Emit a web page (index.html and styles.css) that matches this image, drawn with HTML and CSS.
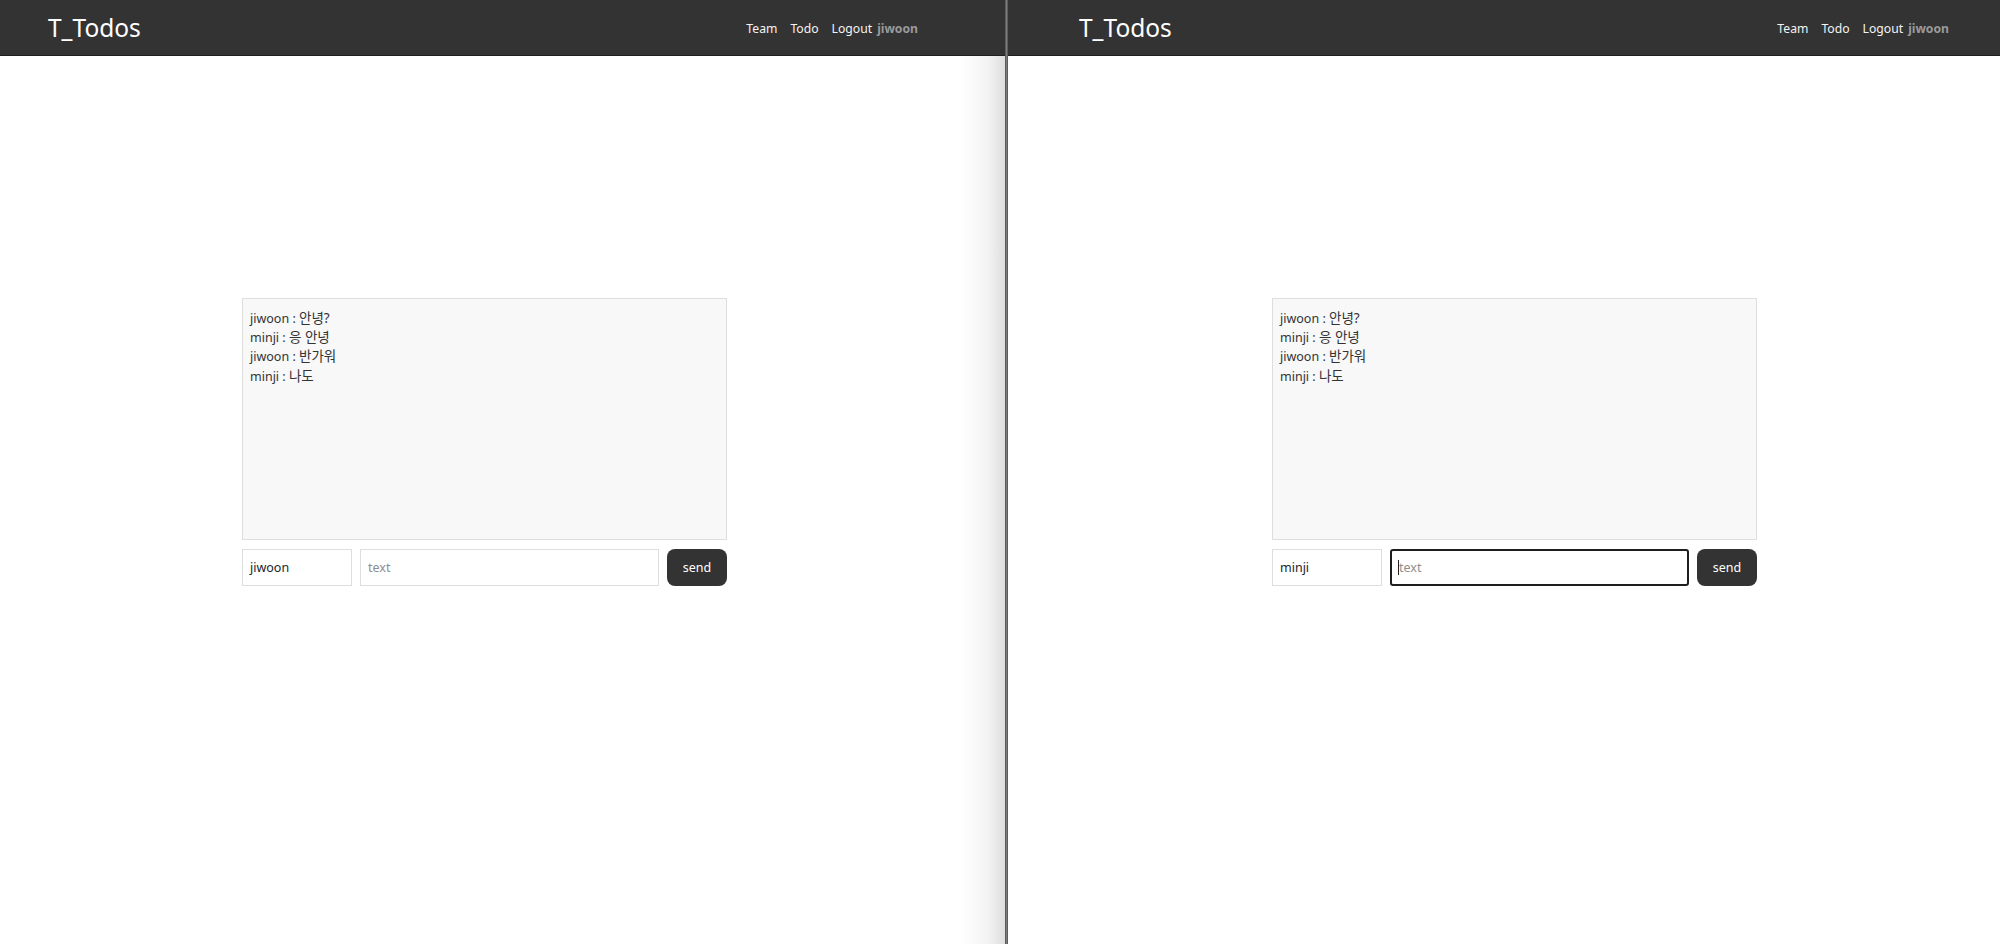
FILE: index.html
```html
<!DOCTYPE html>
<html lang="ko">
<head>
<meta charset="utf-8">
<title>T_Todos</title>
<link rel="stylesheet" href="styles.css">
</head>
<body>
  <div class="screen">
    <section class="pane pane-left">
      <header class="navbar">
        <div class="brand">T_Todos</div>
        <nav class="menu">
          <a class="menu-link">Team</a>
          <a class="menu-link">Todo</a>
          <a class="menu-link">Logout</a>
          <span class="menu-user">jiwoon</span>
        </nav>
      </header>
      <main class="main">
        <div class="chat">
          <div class="chat-log">
            <div class="msg">jiwoon : <span class="ko">안녕?</span></div>
            <div class="msg">minji : <span class="ko">응 안녕</span></div>
            <div class="msg">jiwoon : <span class="ko">반가워</span></div>
            <div class="msg">minji : <span class="ko">나도</span></div>
          </div>
          <div class="chat-form">
            <div class="field field-name"><span class="value">jiwoon</span></div>
            <div class="field field-text"><span class="placeholder">text</span></div>
            <button class="send">send</button>
          </div>
        </div>
      </main>
    </section>
    <div class="divider"></div>
    <section class="pane pane-right">
      <header class="navbar">
        <div class="brand">T_Todos</div>
        <nav class="menu">
          <a class="menu-link">Team</a>
          <a class="menu-link">Todo</a>
          <a class="menu-link">Logout</a>
          <span class="menu-user">jiwoon</span>
        </nav>
      </header>
      <main class="main">
        <div class="chat">
          <div class="chat-log">
            <div class="msg">jiwoon : <span class="ko">안녕?</span></div>
            <div class="msg">minji : <span class="ko">응 안녕</span></div>
            <div class="msg">jiwoon : <span class="ko">반가워</span></div>
            <div class="msg">minji : <span class="ko">나도</span></div>
          </div>
          <div class="chat-form">
            <div class="field field-name"><span class="value">minji</span></div>
            <div class="field field-text focused"><span class="caret"></span><span class="placeholder">text</span></div>
            <button class="send">send</button>
          </div>
        </div>
      </main>
    </section>
  </div>
</body>
</html>
```
FILE: styles.css
```css
* { box-sizing: border-box; }
html, body { margin: 0; padding: 0; }
body {
  width: 2000px;
  height: 944px;
  overflow: hidden;
  background: #fff;
  font-family: "Noto Sans", "Noto Sans CJK KR", sans-serif;
  color: #212529;
}
.screen {
  display: flex;
  height: 944px;
}
.pane {
  display: flex;
  flex-direction: column;
  height: 100%;
  overflow: hidden;
}
.pane-left { width: 1005px; flex: none; }
.pane-right { flex: 1; }

.divider {
  width: 3px;
  flex: none;
  background: #7a7a7a;
  border-left: 1px solid #5e5e5e;
  border-right: 1px solid #5e5e5e;
}

.navbar {
  height: 56px;
  flex: none;
  background: #333333;
  border-bottom: 1px solid #1f1f1f;
  display: flex;
  align-items: center;
  justify-content: space-between;
}
.pane-left .navbar { padding: 0 87px 0 48px; }
.pane-right .navbar { padding: 0 51px 0 71px; }

.brand {
  color: #ffffff;
  font-size: 24.5px;
  font-weight: 400;
  line-height: 1;
  padding-top: 2px;
}
.menu {
  display: flex;
  align-items: center;
  font-size: 12.2px;
  padding-top: 1px;
}
.menu-link {
  color: #f4f4f4;
  margin-right: 13px;
  text-decoration: none;
}
.menu-link:nth-child(3) { margin-right: 5px; }
.menu-user {
  color: #9a9a9a;
  font-weight: 700;
}

.main {
  flex: 1;
  padding-top: 242px;
}
.pane-left .main {
  padding-left: 242px;
  background: linear-gradient(to right, #ffffff 0, #ffffff 960px, #f3f3f3 988px, #dedede 1005px);
}
.pane-right .main { padding-left: 264px; }

.chat {
  width: 485px;
  display: flex;
  flex-direction: column;
  gap: 9px;
}
.chat-log {
  height: 242px;
  background: #f8f8f8;
  border: 1px solid #dedede;
  padding: 10px 7px 8px;
  font-size: 12.5px;
  line-height: 19.2px;
  color: #333;
}
.msg { white-space: nowrap; }
.ko { font-size: 13.5px; }

.chat-form {
  display: flex;
  gap: 8px;
  height: 37px;
}
.field {
  height: 37px;
  border: 1px solid #dedede;
  background: #fff;
  display: flex;
  align-items: center;
  padding: 0 7px;
  font-size: 12.5px;
}
.field-name { width: 110px; flex: none; color: #212529; }
.field-text { flex: 1; }
.placeholder { color: #8e8e8e; }
.field.focused {
  border: 2px solid #1e1e1e;
  border-radius: 3px;
  padding: 0 6px;
}
.caret {
  width: 1px;
  height: 15px;
  background: #222;
}
.send {
  width: 60px;
  flex: none;
  height: 37px;
  border: none;
  border-radius: 8px;
  background: #333333;
  color: #fff;
  font-family: inherit;
  font-size: 12.5px;
  padding: 0;
}
```
